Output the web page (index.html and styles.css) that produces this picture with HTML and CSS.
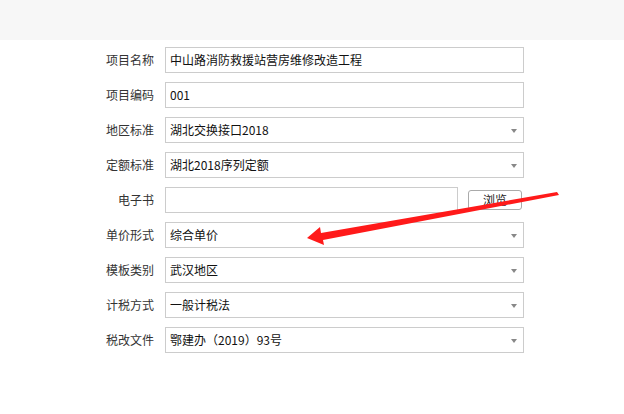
FILE: index.html
```html
<!DOCTYPE html>
<html lang="zh-CN">
<head>
    <meta charset="UTF-8">
    <title>项目信息</title>
    <link rel="stylesheet" href="styles.css">
</head>
<body>
    <div class="top-bar"></div>

    <div class="form">
        <label class="label">项目名称</label>
        <div class="field">中山路消防救援站营房维修改造工程</div>

        <label class="label">项目编码</label>
        <div class="field">001</div>

        <label class="label">地区标准</label>
        <div class="field select">湖北交换接口2018<span class="caret"></span></div>

        <label class="label">定额标准</label>
        <div class="field select">湖北2018序列定额<span class="caret"></span></div>

        <label class="label">电子书</label>
        <div class="file-row">
            <div class="field file"></div>
            <button class="btn">浏览</button>
        </div>

        <label class="label">单价形式</label>
        <div class="field select">综合单价<span class="caret"></span></div>

        <label class="label">模板类别</label>
        <div class="field select">武汉地区<span class="caret"></span></div>

        <label class="label">计税方式</label>
        <div class="field select">一般计税法<span class="caret"></span></div>

        <label class="label">税改文件</label>
        <div class="field select">鄂建办（2019）93号<span class="caret"></span></div>
    </div>

    <!-- annotation arrow drawn over the form -->
    <svg class="arrow" width="624" height="414" viewBox="0 0 624 414">
        <polygon points="557,192 559,195 323,240 324,245 307,238 320,227 321,233" fill="#ff1a1a"/>
    </svg>
</body>
</html>
```

FILE: styles.css
```css
body {
    margin: 0;
    font-family: "Noto Sans CJK SC", "Microsoft YaHei", sans-serif;
    font-size: 12px;
    color: #333;
    background: #fff;
    width: 624px;
    height: 414px;
    overflow: hidden;
    position: relative;
}
.top-bar {
    height: 40px;
    background: #f7f7f7;
}
.form {
    display: grid;
    grid-template-columns: 154px 359px;
    column-gap: 11px;
    row-gap: 9px;
    padding-top: 7px;
}
.label {
    text-align: right;
    line-height: 26px;
    height: 26px;
    color: #333;
}
.field {
    box-sizing: border-box;
    height: 26px;
    line-height: 24px;
    border: 1px solid #ccc;
    padding-left: 4px;
    color: #111;
    background: #fff;
    position: relative;
}
.select {
    padding-right: 20px;
}
.caret {
    position: absolute;
    right: 6px;
    top: 11px;
    width: 0;
    height: 0;
    border-left: 3px solid transparent;
    border-right: 3px solid transparent;
    border-top: 4px solid #888;
}
.file-row {
    display: flex;
    align-items: center;
    gap: 10px;
}
.file {
    width: 293px;
}
.btn {
    box-sizing: border-box;
    width: 54px;
    height: 20px;
    padding: 0;
    font-family: inherit;
    font-size: 12px;
    line-height: 18px;
    color: #222;
    background: #fff;
    border: 1px solid #aaa;
    border-radius: 3px;
}
.arrow {
    position: absolute;
    left: 0;
    top: 0;
    pointer-events: none;
}
```
